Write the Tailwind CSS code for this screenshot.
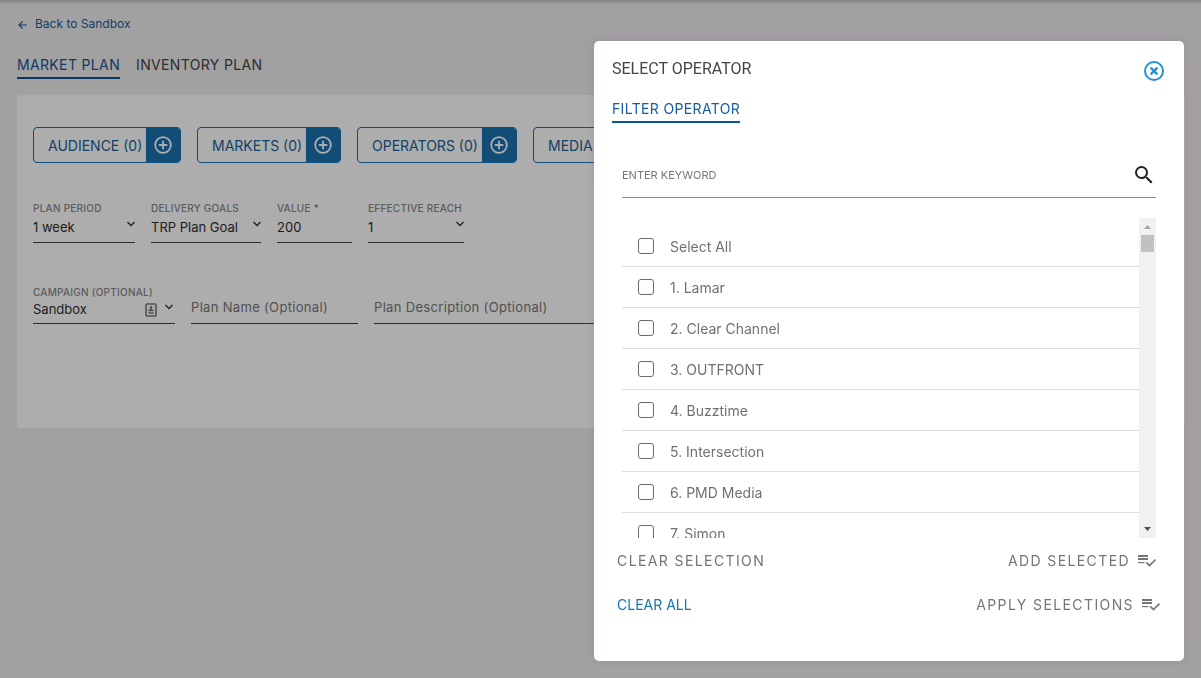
<!DOCTYPE html>
<html lang="en">
<head>
    <meta charset="UTF-8">
    <meta name="viewport" content="width=device-width, initial-scale=1.0">
    <title>Market Plan - Select Operator</title>

    <!-- Tailwind CSS -->
    <script src="https://cdn.jsdelivr.net/npm/@tailwindcss/browser@4"></script>

    <style>
        body {
            font-family: 'Inter', 'Liberation Sans', sans-serif;
        }
    </style>
</head>
<body class="min-h-screen bg-[#ededed] text-[#333] overflow-hidden">
    <!-- Header shadow -->
    <div class="h-1 bg-linear-to-b from-black/20 to-transparent"></div>

    <!-- Page -->
    <main class="pl-[17px] pr-4 pt-2">
        <a href="#" class="flex w-fit items-center gap-[7px] h-6 text-[12px] leading-4 text-[#165d9b]">
            <svg class="w-[10px] h-[10px] ml-px mt-[2px]" viewBox="0 0 10 10" fill="none" stroke="currentColor" stroke-width="1.2"><path d="M9 5H1.2M4.7 1.3L1 5l3.7 3.7"/></svg>
            Back to Sandbox
        </a>

        <nav class="flex gap-4 mt-[19px] text-[14px] leading-5 tracking-wide">
            <a href="#" class="border-b-2 border-[#0c5595] pb-[2px] text-[#165496]">MARKET PLAN</a>
            <a href="#" class="pb-1 text-[#444]">INVENTORY PLAN</a>
        </nav>

        <section class="mt-4 bg-white rounded px-4 pt-8 pb-[104px]">
            <div class="flex gap-4 overflow-hidden text-[14px] text-[#1b6199]">
                <button type="button" class="flex shrink-0 w-[148px] h-9 items-center justify-between border border-[#1b72b0] rounded overflow-hidden pl-[14px] whitespace-nowrap">
                    AUDIENCE (0)
                    <span class="flex h-full w-[34px] items-center justify-center bg-[#1b72b0] text-white">
                        <svg class="w-[18px] h-[18px]" viewBox="0 0 18 18" fill="none" stroke="currentColor" stroke-width="1.8"><circle cx="9" cy="9" r="7.8"/><path d="M9 4.8v8.4M4.8 9h8.4"/></svg>
                    </span>
                </button>
                <button type="button" class="flex shrink-0 w-[144px] h-9 items-center justify-between border border-[#1b72b0] rounded overflow-hidden pl-[14px] whitespace-nowrap">
                    MARKETS (0)
                    <span class="flex h-full w-[34px] items-center justify-center bg-[#1b72b0] text-white">
                        <svg class="w-[18px] h-[18px]" viewBox="0 0 18 18" fill="none" stroke="currentColor" stroke-width="1.8"><circle cx="9" cy="9" r="7.8"/><path d="M9 4.8v8.4M4.8 9h8.4"/></svg>
                    </span>
                </button>
                <button type="button" class="flex shrink-0 w-[160px] h-9 items-center justify-between border border-[#1b72b0] rounded overflow-hidden pl-[14px] whitespace-nowrap">
                    OPERATORS (0)
                    <span class="flex h-full w-[34px] items-center justify-center bg-[#1b72b0] text-white">
                        <svg class="w-[18px] h-[18px]" viewBox="0 0 18 18" fill="none" stroke="currentColor" stroke-width="1.8"><circle cx="9" cy="9" r="7.8"/><path d="M9 4.8v8.4M4.8 9h8.4"/></svg>
                    </span>
                </button>
                <button type="button" class="flex shrink-0 w-[148px] h-9 items-center justify-between border border-[#1b72b0] rounded overflow-hidden pl-[14px] whitespace-nowrap">
                    MEDIA (0)
                    <span class="flex h-full w-[34px] items-center justify-center bg-[#1b72b0] text-white">
                        <svg class="w-[18px] h-[18px]" viewBox="0 0 18 18" fill="none" stroke="currentColor" stroke-width="1.8"><circle cx="9" cy="9" r="7.8"/><path d="M9 4.8v8.4M4.8 9h8.4"/></svg>
                    </span>
                </button>
            </div>

            <!-- Goals -->
            <div class="flex gap-4 mt-[38px]">
                <div class="w-[102px]">
                    <label for="planPeriod" class="block whitespace-nowrap text-[10px] leading-[14px] tracking-wide font-medium text-[#888]">PLAN PERIOD</label>
                    <div class="relative">
                        <select id="planPeriod" class="block w-full h-7 pb-1 appearance-none border-b border-[#404040] text-[13px] leading-5 text-[#2e2e2e]"><option>1 week</option></select>
                        <svg class="absolute right-0 top-[6px] w-2 h-[6px]" viewBox="0 0 8 6" fill="none" stroke="#333" stroke-width="1.3"><path d="M.5 1L4 4.5 7.5 1"/></svg>
                    </div>
                </div>
                <div class="w-[110px]">
                    <label for="deliveryGoals" class="block whitespace-nowrap text-[10px] leading-[14px] tracking-wide font-medium text-[#888]">DELIVERY GOALS</label>
                    <div class="relative">
                        <select id="deliveryGoals" class="block w-full h-7 pb-1 appearance-none border-b border-[#404040] text-[13px] leading-5 text-[#2e2e2e]"><option>TRP Plan Goal</option></select>
                        <svg class="absolute right-0 top-[6px] w-2 h-[6px]" viewBox="0 0 8 6" fill="none" stroke="#333" stroke-width="1.3"><path d="M.5 1L4 4.5 7.5 1"/></svg>
                    </div>
                </div>
                <div class="w-[75px]">
                    <label for="goalValue" class="block whitespace-nowrap text-[10px] leading-[14px] tracking-wide font-medium text-[#888]">VALUE *</label>
                    <input id="goalValue" type="text" value="200" class="block w-full h-7 pb-1 border-b border-[#404040] text-[13px] leading-5 text-[#2e2e2e]">
                </div>
                <div class="w-24">
                    <label for="effectiveReach" class="block whitespace-nowrap text-[10px] leading-[14px] tracking-wide font-medium text-[#888]">EFFECTIVE REACH</label>
                    <div class="relative">
                        <select id="effectiveReach" class="block w-full h-7 pb-1 appearance-none border-b border-[#404040] text-[13px] leading-5 text-[#2e2e2e]"><option>1</option></select>
                        <svg class="absolute right-0 top-[6px] w-2 h-[6px]" viewBox="0 0 8 6" fill="none" stroke="#333" stroke-width="1.3"><path d="M.5 1L4 4.5 7.5 1"/></svg>
                    </div>
                </div>
            </div>

            <!-- Campaign -->
            <div class="flex items-end gap-4 mt-[42px]">
                <div class="w-[142px]">
                    <label for="campaign" class="block whitespace-nowrap text-[10px] leading-[14px] tracking-wide font-medium text-[#888]">CAMPAIGN (OPTIONAL)</label>
                    <div class="relative">
                        <input id="campaign" type="text" value="Sandbox" class="block w-full h-[25px] pb-1 border-b border-[#404040] text-[13px] leading-5 text-[#2e2e2e]">
                        <svg class="absolute right-[18px] top-1 w-3 h-[14px]" viewBox="0 0 12 14" fill="none" stroke="#777" stroke-width="1.6"><rect x="1" y="1" width="10" height="12" rx="1"/><circle cx="6" cy="4.4" r="1.3" fill="#777" stroke="none"/><path d="M3.4 7.4h5.2M3.4 10h5.2M6 5v3"/></svg>
                        <svg class="absolute right-[2px] top-[5px] w-2 h-[6px]" viewBox="0 0 8 6" fill="none" stroke="#333" stroke-width="1.3"><path d="M.5 1L4 4.5 7.5 1"/></svg>
                    </div>
                </div>
                <input type="text" aria-label="Plan Name" placeholder="Plan Name (Optional)" class="block w-[167px] h-7 pb-[6px] border-b border-[#404040] text-[13px] leading-5 tracking-wide placeholder:text-[#777]">
                <input type="text" aria-label="Plan Description" placeholder="Plan Description (Optional)" class="block w-[300px] h-7 pb-[6px] border-b border-[#404040] text-[13px] leading-5 tracking-wide placeholder:text-[#777]">
            </div>
        </section>
    </main>

    <!-- Select Operator Modal -->
    <div class="fixed inset-0 flex items-end justify-end bg-black/32 p-[17px]">
        <div role="dialog" aria-labelledby="modalTitle" class="w-full max-w-[590px] bg-white rounded-[5px] pt-[18px] pb-[46px] shadow-[0_0_8px_rgba(160,90,160,0.3)]">
            <div class="flex justify-between pl-[18px] pr-5">
                <h2 id="modalTitle" class="font-[Roboto] text-[16px] leading-5 text-[#444]">SELECT OPERATOR</h2>
                <button type="button" aria-label="Close" class="mt-[2px] h-5">
                    <svg class="w-5 h-5" viewBox="0 0 20 20" fill="none" stroke="#2291d4" stroke-width="2"><circle cx="10" cy="10" r="9"/><path stroke-width="2.3" d="M6.6 6.6l6.8 6.8M13.4 6.6l-6.8 6.8"/></svg>
                </button>
            </div>

            <div class="flex pl-[18px] mt-[18px]">
                <a href="#" class="border-b-2 border-[#0c5595] pb-[2px] text-[14px] leading-5 tracking-wide text-[#165d9f]">FILTER OPERATOR</a>
            </div>

            <div class="mx-7 mt-[30px] flex h-[45px] items-center border-b border-[#8c8c8c] pr-[3px]">
                <input type="text" aria-label="Enter keyword" placeholder="ENTER KEYWORD" class="flex-1 text-[11px] leading-4 outline-none placeholder:text-[#777]">
                <button type="button" aria-label="Search">
                    <svg class="w-[18px] h-[18px]" viewBox="3 3 18 18" fill="#222"><path d="M15.5 14h-.79l-.28-.27A6.471 6.471 0 0 0 16 9.5 6.5 6.5 0 1 0 9.5 16c1.61 0 3.09-.59 4.23-1.57l.27.28v.79l5 4.99L20.49 19l-4.99-5zm-6 0C7.01 14 5 11.99 5 9.5S7.01 5 9.5 5 14 7.01 14 9.5 11.99 14 9.5 14z"/></svg>
                </button>
            </div>

            <!-- Operator list -->
            <div class="mx-7 mt-5 flex h-80">
                <ul id="operatorList" class="flex-1 overflow-hidden pt-2 text-[14px] text-[#707070]"></ul>
                <div class="flex w-[17px] flex-col items-center bg-[#f1f1f1]" aria-hidden="true">
                    <svg class="w-[17px] h-[17px]" viewBox="0 0 17 17" fill="#a3a3a3"><path d="M5 11l3.5-4 3.5 4z"/></svg>
                    <div class="h-[17px] w-[13px] bg-[#c1c1c1]"></div>
                    <svg class="mt-auto w-[17px] h-[17px]" viewBox="0 0 17 17" fill="#505050"><path d="M5 6l3.5 4L12 6z"/></svg>
                </div>
            </div>

            <div class="pl-[23px] pr-6 text-[14px] leading-5 text-[#757575]">
                <div class="flex justify-between pt-[13px] pr-1">
                    <button type="button" class="tracking-widest">CLEAR SELECTION</button>
                    <button type="button" class="flex items-center gap-2 tracking-widest">
                        ADD SELECTED
                        <svg class="w-[18px] h-3" viewBox="0 0 18 12" fill="none" stroke="currentColor" stroke-width="2"><path d="M0 1h10M0 4h10"/><path stroke-width="1.2" d="M0 7.6h6.5"/><path stroke-width="1.7" d="M8.3 7.3l3.2 3.2 6-6"/></svg>
                    </button>
                </div>
                <div class="flex justify-between pt-6">
                    <button type="button" class="text-[#1a73b0]">CLEAR ALL</button>
                    <button type="button" class="flex items-center gap-2 tracking-widest">
                        APPLY SELECTIONS
                        <svg class="w-[18px] h-3" viewBox="0 0 18 12" fill="none" stroke="currentColor" stroke-width="2"><path d="M0 1h10M0 4h10"/><path stroke-width="1.2" d="M0 7.6h6.5"/><path stroke-width="1.7" d="M8.3 7.3l3.2 3.2 6-6"/></svg>
                    </button>
                </div>
            </div>
        </div>
    </div>

    <script>
        const operators = ['Lamar', 'Clear Channel', 'OUTFRONT', 'Buzztime', 'Intersection', 'PMD Media', 'Simon'];
        const list = document.getElementById('operatorList');
        const rows = ['Select All', ...operators.map((name, i) => `${i + 1}. ${name}`)];

        rows.forEach(text => {
            const item = document.createElement('li');
            item.innerHTML = `
                <label class="flex h-[41px] items-center gap-4 border-b border-[#dedede] pl-4">
                    <input type="checkbox" class="size-4 appearance-none rounded-[3px] border border-[#6b6b6b] checked:bg-[#1b72b0]">
                    ${text}
                </label>
            `;
            list.appendChild(item);
        });

        // Select all
        const boxes = list.querySelectorAll('input');
        boxes[0].addEventListener('change', () => {
            boxes.forEach(box => { box.checked = boxes[0].checked; });
        });
    </script>
</body>
</html>
